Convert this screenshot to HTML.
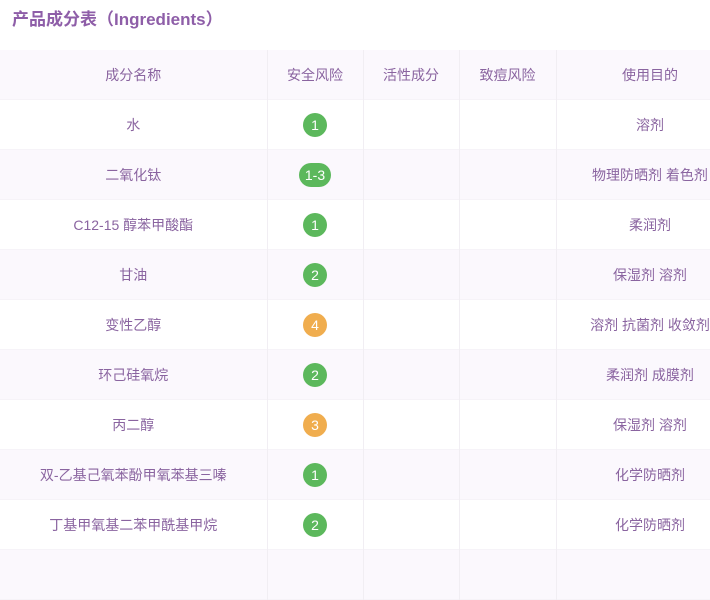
<!DOCTYPE html>
<html><head><meta charset="utf-8"><style>
html,body{margin:0;padding:0;background:#fff;width:710px;height:557px;overflow:hidden}
body{font-family:"Liberation Sans","Noto Sans CJK SC",sans-serif;color:#8a64a0}
h1{margin:0;position:absolute;left:12px;top:8px;font-size:17px;font-weight:bold;color:#8e5ea8;line-height:24px}
table{position:absolute;left:0;top:50px;border-collapse:collapse;table-layout:fixed;width:744px}
td{height:49px;padding:0;text-align:center;font-size:14px;border-right:1px solid #f1eef3;white-space:nowrap}
tr:nth-child(odd){background:#fbf8fd}
tr{border-bottom:1px solid #f6f3f8}
.b{display:inline-block;height:24px;min-width:24px;border-radius:12px;color:#fff;line-height:24px;font-size:14px;box-sizing:border-box}
.g{background:#5cb85c}.o{background:#f0ad4e}.w{padding:0 6px}
</style></head><body>
<h1>产品成分表（Ingredients）</h1>
<table>
<colgroup><col style="width:267px"><col style="width:96px"><col style="width:96px"><col style="width:97px"><col style="width:188px"></colgroup>
<tr><td>成分名称</td><td>安全风险</td><td>活性成分</td><td>致痘风险</td><td>使用目的</td></tr>
<tr><td>水</td><td><span class="b g">1</span></td><td></td><td></td><td>溶剂</td></tr>
<tr><td>二氧化钛</td><td><span class="b g w">1-3</span></td><td></td><td></td><td>物理防晒剂 着色剂</td></tr>
<tr><td>C12-15 醇苯甲酸酯</td><td><span class="b g">1</span></td><td></td><td></td><td>柔润剂</td></tr>
<tr><td>甘油</td><td><span class="b g">2</span></td><td></td><td></td><td>保湿剂 溶剂</td></tr>
<tr><td>变性乙醇</td><td><span class="b o">4</span></td><td></td><td></td><td>溶剂 抗菌剂 收敛剂</td></tr>
<tr><td>环己硅氧烷</td><td><span class="b g">2</span></td><td></td><td></td><td>柔润剂 成膜剂</td></tr>
<tr><td>丙二醇</td><td><span class="b o">3</span></td><td></td><td></td><td>保湿剂 溶剂</td></tr>
<tr><td>双-乙基己氧苯酚甲氧苯基三嗪</td><td><span class="b g">1</span></td><td></td><td></td><td>化学防晒剂</td></tr>
<tr><td>丁基甲氧基二苯甲酰基甲烷</td><td><span class="b g">2</span></td><td></td><td></td><td>化学防晒剂</td></tr>
<tr><td></td><td></td><td></td><td></td><td></td></tr>
</table>
</body></html>
